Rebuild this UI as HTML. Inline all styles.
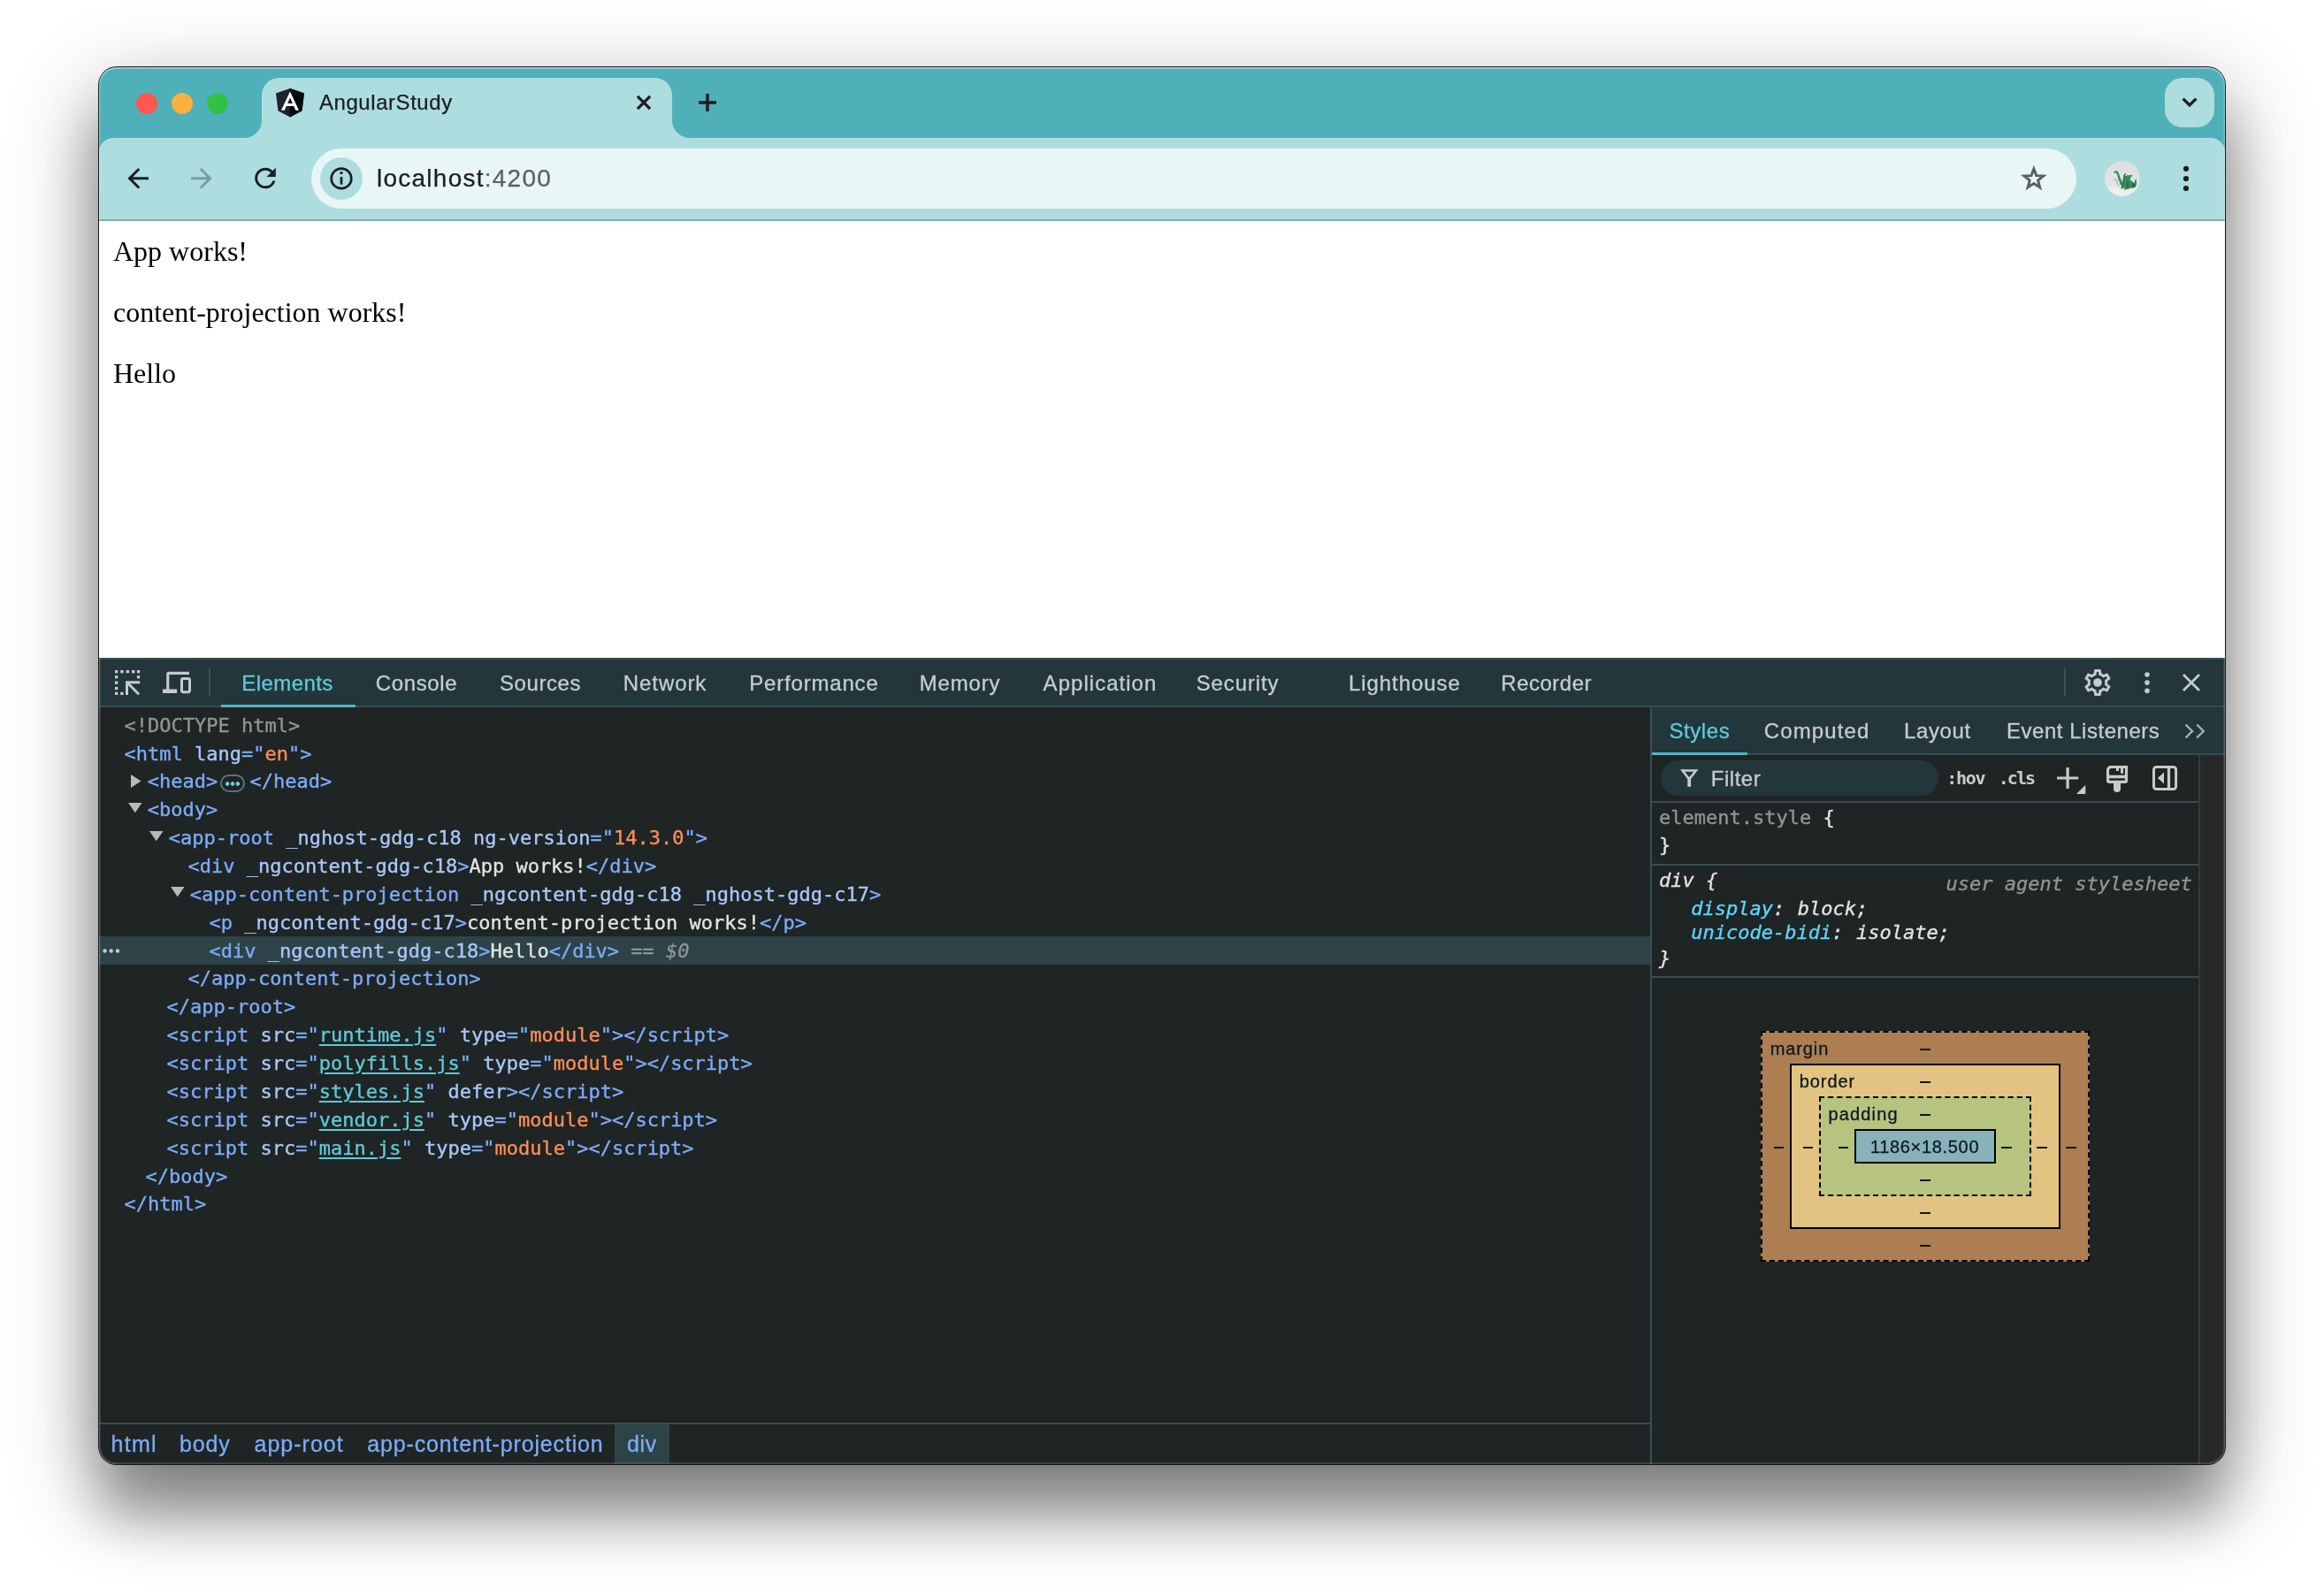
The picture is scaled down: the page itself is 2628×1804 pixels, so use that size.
<!DOCTYPE html>
<html lang="en">
<head>
<meta charset="utf-8">
<title>AngularStudy</title>
<style>
*{box-sizing:border-box;margin:0;padding:0}
html,body{width:2628px;height:1804px;background:#fff;overflow:hidden}
body{position:relative;font-family:"Liberation Sans",sans-serif}
.abs{position:absolute}
#shadow{position:absolute;left:112px;top:76px;width:2404px;height:1580px;border-radius:20px;
  box-shadow:0 0 0 1px rgba(0,0,0,.86),0 33px 97px 0 rgba(0,0,0,.434),0 62px 60px 0 rgba(0,0,0,.244)}
#win{position:absolute;left:112px;top:76px;width:2404px;height:1580px;border-radius:20px;overflow:hidden;background:#1f2424}
#win:after{content:"";position:absolute;left:0;top:0;right:0;bottom:0;border-radius:20px;pointer-events:none;z-index:9;
  box-shadow:inset 0 0 0 1.5px rgba(255,255,255,.18),inset 0 1.5px 0 .5px rgba(255,255,255,.24)}
#inner{position:absolute;left:0;top:-1px;width:2404px;height:1581px;will-change:transform}
/* ---------- chrome frame ---------- */
#frame{position:absolute;left:0;top:0;width:2404px;height:175px;background:#50b0b9}
#toolbar{position:absolute;left:0;top:81px;width:2404px;height:94px;background:#aedde0;border-radius:16px 16px 0 0;border-bottom:2px solid #86a9ab}
#tab{position:absolute;left:184px;top:13px;width:464px;height:69px;background:#aedde0;border-radius:20px 20px 0 0}
#tab:before,#tab:after{content:"";position:absolute;bottom:1px;width:20px;height:20px}
#tab:before{left:-20px;background:radial-gradient(circle at 0 0,transparent 19.5px,#aedde0 20.5px)}
#tab:after{right:-20px;background:radial-gradient(circle at 100% 0,transparent 19.5px,#aedde0 20.5px)}
.tl{position:absolute;top:30px;width:24px;height:24px;border-radius:50%}
#title{position:absolute;left:249px;top:27px;font-size:24px;line-height:28px;color:#1c1e20;letter-spacing:.55px;white-space:nowrap;-webkit-text-stroke:.25px}
#omni{position:absolute;left:240px;top:93px;width:1996px;height:68px;border-radius:34px;background:#e9f6f6}
#chip{position:absolute;left:250px;top:103px;width:48px;height:48px;border-radius:50%;background:#aedde0}
#url{position:absolute;left:314px;top:110px;font-size:28px;line-height:34px;color:#1c1e20;white-space:nowrap;letter-spacing:1.25px;-webkit-text-stroke:.25px}
#url span{color:#5b6062}
#tsearch{position:absolute;left:2336px;top:13px;width:56px;height:56px;border-radius:20px;background:#aedde0}
/* ---------- page ---------- */
#page{position:absolute;left:0;top:175px;width:2404px;height:494px;background:#fff;font-family:"Liberation Serif",serif;font-size:32px;line-height:37px;color:#000}
#page div,#page p{position:absolute;left:16px;white-space:nowrap}

.nw{white-space:nowrap}
.row{white-space:pre;font:22px/32px "DejaVu Sans Mono","Liberation Mono",monospace;color:#e3e3e3;-webkit-text-stroke:.35px}
.mono{font:22px/28px "DejaVu Sans Mono","Liberation Mono",monospace;color:#e3e3e3;-webkit-text-stroke:.35px}
.t{color:#7cacf8}.n{color:#a8c7fa}.v{color:#fe8d59}.x{color:#e3e3e3}.g{color:#8f9696}.k{color:#5fcad8;text-decoration:underline;text-decoration-thickness:2px;text-underline-offset:3px}.p{color:#5cd5fb}
.pill{display:inline-block;width:28px;height:20px;border:2px solid #5c7479;border-radius:10px;margin:0 5.800px 0 2.600px;vertical-align:-5px;background:radial-gradient(circle 2.300px at 6.200px 8.500px,#62d2da 2px,transparent 2.600px),radial-gradient(circle 2.300px at 12px 8.500px,#62d2da 2px,transparent 2.600px),radial-gradient(circle 2.300px at 17.800px 8.500px,#62d2da 2px,transparent 2.600px)}
.sansf{font-family:"Liberation Sans",sans-serif;-webkit-text-stroke:.3px}.monof{font-family:"DejaVu Sans Mono","Liberation Mono",monospace}
#dt{position:absolute;left:-112px;top:-75px;width:2628px;height:1804px;will-change:transform}
</style>
</head>
<body>
<div id="shadow"></div>
<div id="win">
 <div id="inner">
  <div id="frame"></div>
  <div class="tl" style="left:42px;background:#fe5850"></div>
  <div class="tl" style="left:82px;background:#fdb03b"></div>
  <div class="tl" style="left:122px;background:#31c147"></div>
  <div id="toolbar"></div>
  <div id="tab"></div>
  <div id="title">AngularStudy</div>
  <div id="tsearch"></div>
  <div id="omni"></div>
  <div id="chip"></div>
  <div id="url">localhost<span>:4200</span></div>
  <svg id="chromeicons" class="abs" style="left:0;top:0" width="2404" height="175" viewBox="0 0 2404 175" fill="none">
    <!-- angular favicon -->
    <g transform="translate(200,25) scale(0.17186,0.162)">
      <g transform="translate(-31.9,-30)">
        <polygon points="125,30 31.9,63.2 46.1,186.3 125,230 203.9,186.3 218.1,63.2" fill="#1e222a"/>
        <polygon points="125,30 125,230 203.9,186.3 218.1,63.2" fill="#040b12"/>
        <path d="M125,52.1L66.8,182.6h21.7l11.7-29.2h49.4l11.7,29.2h21.7L125,52.1z M142,135.4H108l17-40.9L142,135.4z" fill="#fff"/>
      </g>
    </g>
    <!-- tab close -->
    <path d="M608.9 33.9l14.2 14.2M623.1 33.9l-14.2 14.2" stroke="#1c1e20" stroke-width="3.3"/>
    <!-- new tab plus -->
    <path d="M678 41h20M688 31v20" stroke="#1c1e20" stroke-width="3.4"/>
    <!-- tab search chevron -->
    <path d="M2356.6 36.6l7.4 7.4 7.4-7.4" stroke="#1c1e20" stroke-width="3.3"/>
    <!-- back -->
    <path transform="translate(26.5,109.1) scale(1.475)" d="M20 11H7.83l5.59-5.59L12 4l-8 8 8 8 1.41-1.41L7.83 13H20v-2z" fill="#1c1e20"/>
    <!-- forward -->
    <path transform="translate(98.2,109.1) scale(1.475)" d="M12 4l-1.41 1.41L16.17 11H4v2h12.17l-5.58 5.59L12 20l8-8z" fill="#7b9c9f"/>
    <!-- reload -->
    <path transform="translate(170.3,108.8) scale(1.475)" d="M17.65 6.35A7.958 7.958 0 0 0 12 4c-4.42 0-7.99 3.58-7.99 8s3.57 8 7.99 8c3.73 0 6.84-2.55 7.73-6h-2.08A5.99 5.99 0 0 1 12 18c-3.31 0-6-2.69-6-6s2.69-6 6-6c1.66 0 3.14.69 4.22 1.78L13 11h7V4l-2.35 2.35z" fill="#1c1e20"/>
    <!-- site info -->
    <circle cx="274" cy="126.9" r="11.3" stroke="#1c1e20" stroke-width="2.7"/>
    <path d="M274 125v8.6" stroke="#1c1e20" stroke-width="2.7"/>
    <circle cx="274" cy="120.6" r="1.7" fill="#1c1e20"/>
    <!-- star -->
    <path d="M2187.90 115.95 L2190.78 123.59 L2198.93 123.97 L2192.56 129.06 L2194.72 136.93 L2187.90 132.45 L2181.08 136.93 L2183.24 129.06 L2176.87 123.97 L2185.02 123.59z" stroke="#5a5e60" stroke-width="2.9" stroke-linejoin="miter" stroke-miterlimit="6"/>
    <!-- avatar -->
    <defs><clipPath id="avc"><circle cx="2287.9" cy="127" r="19.8"/></clipPath>
    <linearGradient id="avg" x1="0" y1="0" x2="0" y2="1"><stop offset="0" stop-color="#dddfdf"/><stop offset=".72" stop-color="#e3e5e5"/><stop offset=".78" stop-color="#ededed"/><stop offset="1" stop-color="#f1f1f1"/></linearGradient></defs>
    <circle cx="2287.9" cy="127" r="19.8" fill="url(#avg)"/>
    <g clip-path="url(#avc)">
    <polygon points="2278.1,128.0 2280.3,127.1 2282.1,128.6 2283.3,133.1 2285.1,135.7 2283.6,136.3 2281.8,133.1 2280.9,129.5 2278.4,128.9" fill="#b3bbb7"/>
    <polygon points="2278.0,119.4 2279.6,118.6 2281.8,118.3 2283.4,119.7 2284.8,123.5 2286.3,127.7 2288.1,131.3 2289.0,133.1 2287.8,138.5 2286.3,138.7 2286.9,135.8 2285.1,131.9 2283.3,127.1 2282.1,122.6 2280.9,120.6 2278.4,120.6" fill="#2f8f5c"/>
    <polygon points="2292.1,124.1 2292.9,123.2 2299.7,122.9 2297.3,125.9 2296.7,128.3 2301.6,132.0 2302.1,129.2 2303.7,126.8 2304.2,133.1 2303.1,136.1 2300.4,137.6 2294.4,138.5 2290.5,140.2 2291.1,133.1" fill="#34905f"/>
    <polygon points="2288.1,131.3 2289.6,122.3 2292.4,120.4 2291.1,123.8 2292.1,124.1 2291.1,133.1 2290.2,140.0 2289.6,137.6 2287.8,138.5" fill="#297f51"/>
    <polygon points="2294.1,125.9 2295.6,133.1 2295.3,138.2 2292.9,138.8 2292.0,133.1" fill="#2a7450"/>
    <polygon points="2298.3,133.1 2301.6,132.0 2303.1,136.1 2300.4,137.6" fill="#22694a"/>
    </g>
    <!-- kebab -->
    <circle cx="2360" cy="115.8" r="3.1" fill="#1c1e20"/><circle cx="2360" cy="127" r="3.1" fill="#1c1e20"/><circle cx="2360" cy="138" r="3.1" fill="#1c1e20"/>
  </svg>
  <div id="page">
    <div style="top:16px">App works!</div>
    <p style="top:85px">content-projection works!</p>
    <div style="top:154px">Hello</div>
  </div>
  <div id="dt">
<div class="abs" style="left:112px;top:744px;width:2404px;height:56px;background:#23363c;"></div>
<div class="abs" style="left:112px;top:744px;width:2404px;height:2px;background:#384d52;"></div>
<div class="abs" style="left:112px;top:798px;width:2404px;height:2px;background:#384d52;"></div>
<div class="abs" style="left:236px;top:756px;width:2px;height:32px;background:#3a5056;"></div>
<div class="abs" style="left:2334px;top:756px;width:2px;height:32px;background:#3a5056;"></div>
<div class="abs" style="left:250px;top:797px;width:152px;height:3px;background:#4fb5c4;"></div>
<div class="abs nw sansf" style="left:273.30px;top:757.68px;font-size:24px;line-height:30px;color:#5fcad8;letter-spacing:0.422px;">Elements</div>
<div class="abs nw sansf" style="left:424.80px;top:757.68px;font-size:24px;line-height:30px;color:#c7cdcc;letter-spacing:0.615px;">Console</div>
<div class="abs nw sansf" style="left:565.00px;top:757.68px;font-size:24px;line-height:30px;color:#c7cdcc;letter-spacing:0.560px;">Sources</div>
<div class="abs nw sansf" style="left:704.80px;top:757.68px;font-size:24px;line-height:30px;color:#c7cdcc;letter-spacing:0.913px;">Network</div>
<div class="abs nw sansf" style="left:847.30px;top:757.68px;font-size:24px;line-height:30px;color:#c7cdcc;letter-spacing:0.806px;">Performance</div>
<div class="abs nw sansf" style="left:1039.70px;top:757.68px;font-size:24px;line-height:30px;color:#c7cdcc;letter-spacing:0.846px;">Memory</div>
<div class="abs nw sansf" style="left:1179.60px;top:757.68px;font-size:24px;line-height:30px;color:#c7cdcc;letter-spacing:1.034px;">Application</div>
<div class="abs nw sansf" style="left:1352.70px;top:757.68px;font-size:24px;line-height:30px;color:#c7cdcc;letter-spacing:0.872px;">Security</div>
<div class="abs nw sansf" style="left:1525.00px;top:757.68px;font-size:24px;line-height:30px;color:#c7cdcc;letter-spacing:0.924px;">Lighthouse</div>
<div class="abs nw sansf" style="left:1697.30px;top:757.68px;font-size:24px;line-height:30px;color:#c7cdcc;letter-spacing:0.498px;">Recorder</div>
<svg class="abs" style="left:112px;top:744px" width="2404" height="56" viewBox="112 744 2404 56" fill="none">
<g fill="#c5cccb">
<!-- inspect icon: dotted square + arrow -->
<path d="M130 758h3.300v3.300h-3.300z" />
<rect x="136.200" y="758" width="3.400" height="3.300"/><rect x="142.600" y="758" width="3.400" height="3.300"/><rect x="149" y="758" width="3.400" height="3.300"/><rect x="154.900" y="758" width="3.300" height="3.300"/>
<rect x="130" y="764.100" width="3.300" height="3.300"/><rect x="130" y="770.500" width="3.300" height="3.300"/><rect x="130" y="776.900" width="3.300" height="3.300"/><rect x="130" y="782.800" width="3.300" height="3.200"/>
<rect x="154.900" y="764.100" width="3.300" height="3.300"/>
<rect x="136.200" y="782.800" width="3.400" height="3.200"/>
<path d="M142 770.200h16.200v3h-11.100l11 11-2.100 2.100-11-11v10.700h-3z"/>
<!-- device icon -->
<path d="M188.200 762.600a2.800 2.800 0 0 1 2.800-2.800h23v3.200h-22.700v16.600h8.800v4.400h-16.100v-4.400h4.200z"/>
</g>
<rect x="205.500" y="767.500" width="9" height="15.200" rx="1.600" stroke="#c5cccb" stroke-width="3"/>
<!-- gear -->
<g transform="translate(2354,754) scale(1.5)">
<path fill="#c5cccb" d="M19.43 12.98c.04-.32.07-.64.07-.98 0-.34-.03-.66-.07-.98l2.110-1.650c.19-.15.24-.42.12-.64l-2-3.460c-.09-.16-.26-.25-.44-.25-.06 0-.12.01-.17.03l-2.490 1c-.52-.4-1.080-.73-1.690-.98l-.38-2.650C14.460 2.180 14.250 2 14 2h-4c-.25 0-.46.18-.49.42l-.38 2.650c-.61.25-1.170.59-1.690.98l-2.490-1c-.06-.02-.12-.03-.18-.03-.17 0-.34.09-.43.25l-2 3.460c-.13.22-.07.49.12.64l2.110 1.650c-.04.32-.07.65-.07.98 0 .33.03.66.07.98l-2.110 1.650c-.19.15-.24.42-.12.64l2 3.460c.09.16.26.25.44.25.06 0 .12-.01.17-.03l2.490-1c.52.4 1.080.73 1.690.98l.38 2.650c.03.24.24.42.49.42h4c.25 0 .46-.18.49-.42l.38-2.650c.61-.25 1.170-.59 1.690-.98l2.490 1c.06.02.12.03.18.03.17 0 .34-.09.43-.25l2-3.460c.12-.22.07-.49-.12-.64l-2.110-1.650zm-1.980-1.710c.04.31.05.52.05.73 0 .21-.02.43-.05.73l-.14 1.130.89.7 1.080.84-.7 1.210-1.270-.51-1.040-.42-.9.68c-.43.32-.84.56-1.250.73l-1.060.43-.16 1.130-.2 1.350h-1.400l-.19-1.350-.16-1.130-1.060-.43c-.43-.18-.83-.41-1.230-.71l-.91-.7-1.060.43-1.270.51-.7-1.210 1.080-.84.89-.7-.14-1.130c-.03-.31-.05-.54-.05-.74s.02-.43.05-.73l.14-1.130-.89-.7-1.080-.84.7-1.210 1.270.51 1.040.42.9-.68c.43-.32.84-.56 1.250-.73l1.060-.43.16-1.130.2-1.350h1.390l.19 1.350.16 1.130 1.060.43c.43.18.83.41 1.230.71l.91.7 1.060-.43 1.270-.51.7 1.210-1.070.85-.89.7.14 1.130z"/>
<circle cx="12" cy="12" r="3.200" fill="#c5cccb"/>
</g>
<!-- kebab -->
<circle cx="2428" cy="763" r="2.8" fill="#c5cccb"/><circle cx="2428" cy="772.1" r="2.8" fill="#c5cccb"/><circle cx="2428" cy="781.200" r="2.8" fill="#c5cccb"/>
<!-- close -->
<path d="M2469 763l18 18M2487 763l-18 18" stroke="#c5cccb" stroke-width="2.800"/>
</svg>
<div class="abs" style="left:112px;top:1059px;width:1754px;height:32px;background:#2d4347;"></div>
<svg class="abs" style="left:112px;top:1058.7px" width="40" height="32" viewBox="112 1058 40 32"><circle cx="118.500" cy="1074.500" r="2.200" fill="#c5cccb"/><circle cx="125.700" cy="1074.500" r="2.200" fill="#c5cccb"/><circle cx="132.900" cy="1074.500" r="2.200" fill="#c5cccb"/></svg>
<div class="abs row" style="left:140.5px;top:804.6px"><span class="g">&lt;!DOCTYPE html&gt;</span></div>
<div class="abs row" style="left:140.5px;top:836.5px"><span class="t">&lt;html </span><span class="n">lang</span><span class="t">="</span><span class="v">en</span><span class="t">"&gt;</span></div>
<div class="abs row" style="left:166.7px;top:868.3px"><span class="t">&lt;head&gt;</span><span class="pill"></span><span class="t">&lt;/head&gt;</span></div>
<svg class="abs" style="left:147.5px;top:875.8px" width="12" height="15" viewBox="0 0 12 15"><path d="M0 0l11.500 7.500L0 15z" fill="#b5bbb9"/></svg>
<div class="abs row" style="left:166.7px;top:900.2px"><span class="t">&lt;body&gt;</span></div>
<svg class="abs" style="left:145.1px;top:907.6px" width="16" height="12" viewBox="0 0 16 12"><path d="M0 0h15.500L7.750 11.300z" fill="#b5bbb9"/></svg>
<div class="abs row" style="left:190.7px;top:932.1px"><span class="t">&lt;app-root </span><span class="n">_nghost-gdg-c18</span><span class="t"> </span><span class="n">ng-version</span><span class="t">="</span><span class="v">14.3.0</span><span class="t">"&gt;</span></div>
<svg class="abs" style="left:169.1px;top:939.5px" width="16" height="12" viewBox="0 0 16 12"><path d="M0 0h15.500L7.750 11.300z" fill="#b5bbb9"/></svg>
<div class="abs row" style="left:212.5px;top:964.0px"><span class="t">&lt;div </span><span class="n">_ngcontent-gdg-c18</span><span class="t">&gt;</span><span class="x">App works!</span><span class="t">&lt;/div&gt;</span></div>
<div class="abs row" style="left:214.7px;top:995.8px"><span class="t">&lt;app-content-projection </span><span class="n">_ngcontent-gdg-c18</span><span class="t"> </span><span class="n">_nghost-gdg-c17</span><span class="t">&gt;</span></div>
<svg class="abs" style="left:193.1px;top:1003.2px" width="16" height="12" viewBox="0 0 16 12"><path d="M0 0h15.500L7.750 11.300z" fill="#b5bbb9"/></svg>
<div class="abs row" style="left:236.5px;top:1027.7px"><span class="t">&lt;p </span><span class="n">_ngcontent-gdg-c17</span><span class="t">&gt;</span><span class="x">content-projection works!</span><span class="t">&lt;/p&gt;</span></div>
<div class="abs row" style="left:236.5px;top:1059.6px"><span class="t">&lt;div </span><span class="n">_ngcontent-gdg-c18</span><span class="t">&gt;</span><span class="x">Hello</span><span class="t">&lt;/div&gt;</span><span class="g"> == <i>$0</i></span></div>
<div class="abs row" style="left:212.5px;top:1091.4px"><span class="t">&lt;/app-content-projection&gt;</span></div>
<div class="abs row" style="left:188.5px;top:1123.3px"><span class="t">&lt;/app-root&gt;</span></div>
<div class="abs row" style="left:188.5px;top:1155.2px"><span class="t">&lt;script </span><span class="n">src</span><span class="t">="</span><span class="k">runtime.js</span><span class="t">"</span><span class="t"> </span><span class="n">type</span><span class="t">="</span><span class="v">module</span><span class="t">"</span><span class="t">&gt;&lt;/script&gt;</span></div>
<div class="abs row" style="left:188.5px;top:1187.0px"><span class="t">&lt;script </span><span class="n">src</span><span class="t">="</span><span class="k">polyfills.js</span><span class="t">"</span><span class="t"> </span><span class="n">type</span><span class="t">="</span><span class="v">module</span><span class="t">"</span><span class="t">&gt;&lt;/script&gt;</span></div>
<div class="abs row" style="left:188.5px;top:1218.9px"><span class="t">&lt;script </span><span class="n">src</span><span class="t">="</span><span class="k">styles.js</span><span class="t">"</span><span class="t"> </span><span class="n">defer</span><span class="t">&gt;&lt;/script&gt;</span></div>
<div class="abs row" style="left:188.5px;top:1250.8px"><span class="t">&lt;script </span><span class="n">src</span><span class="t">="</span><span class="k">vendor.js</span><span class="t">"</span><span class="t"> </span><span class="n">type</span><span class="t">="</span><span class="v">module</span><span class="t">"</span><span class="t">&gt;&lt;/script&gt;</span></div>
<div class="abs row" style="left:188.5px;top:1282.7px"><span class="t">&lt;script </span><span class="n">src</span><span class="t">="</span><span class="k">main.js</span><span class="t">"</span><span class="t"> </span><span class="n">type</span><span class="t">="</span><span class="v">module</span><span class="t">"</span><span class="t">&gt;&lt;/script&gt;</span></div>
<div class="abs row" style="left:164.5px;top:1314.5px"><span class="t">&lt;/body&gt;</span></div>
<div class="abs row" style="left:140.5px;top:1346.4px"><span class="t">&lt;/html&gt;</span></div>
<div class="abs" style="left:112px;top:1609px;width:1754px;height:2px;background:#384d52;"></div>
<div class="abs" style="left:695px;top:1611px;width:62px;height:44px;background:#2d4347;"></div>
<div class="abs nw sansf" style="left:125.60px;top:1617.84px;font-size:25px;line-height:31px;color:#7cacf8;letter-spacing:1.242px;">html</div>
<div class="abs nw sansf" style="left:203.00px;top:1617.84px;font-size:25px;line-height:31px;color:#7cacf8;letter-spacing:0.830px;">body</div>
<div class="abs nw sansf" style="left:287.50px;top:1617.84px;font-size:25px;line-height:31px;color:#7cacf8;letter-spacing:1.004px;">app-root</div>
<div class="abs nw sansf" style="left:415.30px;top:1617.84px;font-size:25px;line-height:31px;color:#7cacf8;letter-spacing:0.840px;">app-content-projection</div>
<div class="abs nw sansf" style="left:708.90px;top:1617.84px;font-size:25px;line-height:31px;color:#7cacf8;letter-spacing:0.721px;">div</div>
<div class="abs" style="left:1866px;top:800px;width:2px;height:856px;background:#3a4f54;"></div>
<div class="abs" style="left:1868px;top:800px;width:648px;height:54px;background:#23363c;"></div>
<div class="abs" style="left:1868px;top:852px;width:648px;height:2px;background:#384d52;"></div>
<div class="abs" style="left:1868px;top:851px;width:108px;height:3px;background:#4fb5c4;"></div>
<div class="abs nw sansf" style="left:1887.40px;top:811.98px;font-size:24px;line-height:30px;color:#5fcad8;letter-spacing:0.589px;">Styles</div>
<div class="abs nw sansf" style="left:1994.70px;top:811.98px;font-size:24px;line-height:30px;color:#c7cdcc;letter-spacing:1.131px;">Computed</div>
<div class="abs nw sansf" style="left:2152.90px;top:811.98px;font-size:24px;line-height:30px;color:#c7cdcc;letter-spacing:0.662px;">Layout</div>
<div class="abs nw sansf" style="left:2269.00px;top:811.98px;font-size:24px;line-height:30px;color:#c7cdcc;letter-spacing:0.527px;">Event Listeners</div>
<svg class="abs" style="left:2466px;top:815px" width="32" height="26" viewBox="2466 815 32 26" fill="none"><path d="M2471.500 819.500l7.500 7.500-7.500 7.500M2484.200 819.500l7.500 7.500-7.500 7.500" stroke="#aab2b1" stroke-width="2.400"/></svg>
<div class="abs" style="left:2486px;top:854px;width:30px;height:802px;background:#272828;border-left:2px solid #37393a"></div>
<div class="abs" style="left:1868px;top:906px;width:618px;height:2px;background:#384d52;"></div>
<div class="abs" style="left:1878px;top:860px;width:314px;height:40px;background:#23363c;border-radius:20px"></div>
<svg class="abs" style="left:1898px;top:868px" width="24" height="24" viewBox="1898 868 24 24" fill="none"><path d="M1902.600 871.500h15.200l-6.300 8.300h-2.600z" stroke="#c5cccb" stroke-width="2.600" stroke-linejoin="miter"/><path d="M1910.200 879v10.800" stroke="#c5cccb" stroke-width="3.800"/></svg>
<div class="abs nw sansf" style="left:1934.80px;top:865.68px;font-size:24px;line-height:30px;color:#c7cdcc;letter-spacing:0.512px;">Filter</div>
<div class="abs nw monof" style="left:2201.30px;top:867.78px;font-size:20px;line-height:25px;font-weight:bold;color:#c7cdcc;letter-spacing:-1.341px;">:hov</div>
<div class="abs nw monof" style="left:2259.80px;top:867.78px;font-size:20px;line-height:25px;font-weight:bold;color:#c7cdcc;letter-spacing:-1.974px;">.cls</div>
<svg class="abs" style="left:2320px;top:860px" width="150" height="42" viewBox="2320 860 150 42" fill="none">
<path d="M2326 880h24.200M2338.100 867.900v24.200" stroke="#c5cccb" stroke-width="3.200"/>
<path d="M2358.300 887.800v10.100h-10.300z" fill="#c5cccb"/>
<!-- brush -->
<path fill-rule="evenodd" fill="#c5cccb" d="M2382 871a5 5 0 0 1 5-5h19.100v17a3 3 0 0 1-3 3h-5.100v6.100a4 4 0 0 1-8 0v-6.100h-5a3 3 0 0 1-3-3z M2385.100 871.500a2.500 2.500 0 0 1 2.500-2.500h5.400v3h3v-3h2v5.800h3v-5.800h1.900v7.700h-17.800z M2385.100 880.200h17.800v2.500h-17.800z"/>
<!-- panel -->
<rect x="2435.500" y="867.500" width="25.100" height="25.100" rx="3" stroke="#c5cccb" stroke-width="3"/>
<path d="M2452.500 867.500v25.100" stroke="#c5cccb" stroke-width="3.200"/>
<path d="M2447 873.500v12.900l-7.100-6.400z" fill="#c5cccb"/>
</svg>
<div class="abs nw mono" style="left:1876.1px;top:910.69px;"><span class="g">element.style</span><span class="x"> {</span></div>
<div class="abs nw mono" style="left:1876.1px;top:941.79px;"><span class="x">}</span></div>
<div class="abs" style="left:1868px;top:977px;width:618px;height:2px;background:#384d52;"></div>
<div class="abs nw mono" style="left:1876.1px;top:982.09px;"><i><span class="x">div {</span></i></div>
<div class="abs nw mono" style="left:2200.6px;top:985.69px;"><i><span class="g">user agent stylesheet</span></i></div>
<div class="abs nw mono" style="left:1912.2px;top:1013.69px;"><i><span class="p">display</span><span class="x">:</span><span style="margin-left:1.3px"><span class="x"> block;</span></span></i></div>
<div class="abs nw mono" style="left:1912.2px;top:1041.39px;"><i><span class="p">unicode-bidi</span><span class="x">:</span><span style="margin-left:1.3px"><span class="x"> isolate;</span></span></i></div>
<div class="abs nw mono" style="left:1876.1px;top:1070.39px;"><i><span class="x">}</span></i></div>
<div class="abs" style="left:1868px;top:1104px;width:618px;height:2px;background:#384d52;"></div>
<div class="abs" style="left:1991px;top:1166px;width:372px;height:261px;background:#ac7e51;border:2px dashed #000"></div>
<div class="abs" style="left:2024px;top:1203px;width:306px;height:187px;background:#e3c381;border:2px solid #000"></div>
<div class="abs" style="left:2057px;top:1240px;width:240px;height:113px;background:#b7c47f;border:2px dashed #000"></div>
<div class="abs" style="left:2097px;top:1277px;width:160px;height:39px;background:#88b1bc;border:2px solid #000"></div>
<div class="abs nw sansf" style="left:2001.70px;top:1173.57px;font-size:20px;line-height:25px;color:#0a1a21;letter-spacing:0.898px;">margin</div>
<div class="abs nw sansf" style="left:2034.70px;top:1210.57px;font-size:20px;line-height:25px;color:#0a1a21;letter-spacing:0.950px;">border</div>
<div class="abs nw sansf" style="left:2067.60px;top:1247.57px;font-size:20px;line-height:25px;color:#0a1a21;letter-spacing:1.124px;">padding</div>
<div class="abs nw sansf" style="left:2114.90px;top:1284.87px;font-size:20px;line-height:25px;color:#0a1a21;letter-spacing:0.676px;">1186×18.500</div>
<div class="abs" style="left:2171.4px;top:1186.1px;width:11.2px;height:1.9px;background:#0a1a21;"></div>
<div class="abs" style="left:2171.4px;top:1223.1px;width:11.2px;height:1.9px;background:#0a1a21;"></div>
<div class="abs" style="left:2171.4px;top:1260.1px;width:11.2px;height:1.9px;background:#0a1a21;"></div>
<div class="abs" style="left:2171.4px;top:1334.1px;width:11.2px;height:1.9px;background:#0a1a21;"></div>
<div class="abs" style="left:2171.4px;top:1371.1px;width:11.2px;height:1.9px;background:#0a1a21;"></div>
<div class="abs" style="left:2171.4px;top:1408.1px;width:11.2px;height:1.9px;background:#0a1a21;"></div>
<div class="abs" style="left:2006.1000000000001px;top:1297.1px;width:11.2px;height:1.9px;background:#0a1a21;"></div>
<div class="abs" style="left:2038.9px;top:1297.1px;width:11.2px;height:1.9px;background:#0a1a21;"></div>
<div class="abs" style="left:2078.9px;top:1297.1px;width:11.2px;height:1.9px;background:#0a1a21;"></div>
<div class="abs" style="left:2263.4px;top:1297.1px;width:11.2px;height:1.9px;background:#0a1a21;"></div>
<div class="abs" style="left:2303.4px;top:1297.1px;width:11.2px;height:1.9px;background:#0a1a21;"></div>
<div class="abs" style="left:2336.4px;top:1297.1px;width:11.2px;height:1.9px;background:#0a1a21;"></div>
</div>
 </div>
</div>
</body>
</html>
